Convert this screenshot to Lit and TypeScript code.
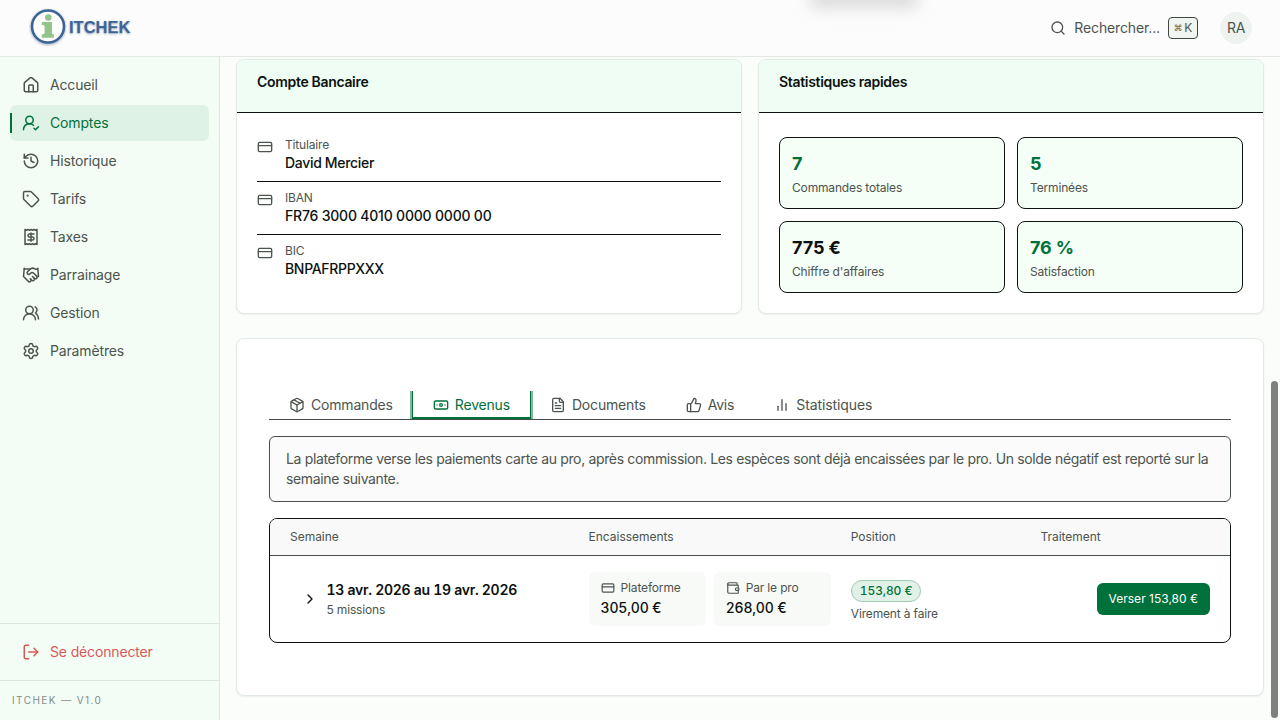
import { LitElement, html, css, svg } from "lit";
import { customElement } from "lit/decorators.js";
import { classMap } from "lit/directives/class-map.js";

const ICONS: Record<string, unknown> = {
  house: svg`<path d="M15 21v-8a1 1 0 0 0-1-1h-4a1 1 0 0 0-1 1v8"/><path d="M3 10a2 2 0 0 1 .709-1.528l7-5.999a2 2 0 0 1 2.582 0l7 5.999A2 2 0 0 1 21 10v9a2 2 0 0 1-2 2H5a2 2 0 0 1-2-2z"/>`,
  userCheck: svg`<path d="M2 21a8 8 0 0 1 13.292-6"/><circle cx="10" cy="8" r="5"/><path d="m16 19 2 2 4-4"/>`,
  history: svg`<path d="M3 12a9 9 0 1 0 9-9 9.75 9.75 0 0 0-6.74 2.74L3 8"/><path d="M3 3v5h5"/><path d="M12 7v5l4 2"/>`,
  tag: svg`<path d="M12.586 2.586A2 2 0 0 0 11.172 2H4a2 2 0 0 0-2 2v7.172a2 2 0 0 0 .586 1.414l8.704 8.704a2.426 2.426 0 0 0 3.42 0l6.58-6.58a2.426 2.426 0 0 0 0-3.42z"/><circle cx="7.5" cy="7.5" r=".5" fill="currentColor"/>`,
  receipt: svg`<path d="M4 2v20l2-1 2 1 2-1 2 1 2-1 2 1 2-1 2 1V2l-2 1-2-1-2 1-2-1-2 1-2-1-2 1Z"/><path d="M16 8h-6a2 2 0 1 0 0 4h4a2 2 0 1 1 0 4H8"/><path d="M12 17.5v-11"/>`,
  handshake: svg`<path d="m11 17 2 2a1 1 0 1 0 3-3"/><path d="m14 14 2.5 2.5a1 1 0 1 0 3-3l-3.88-3.88a3 3 0 0 0-4.24 0l-.88.88a1 1 0 1 1-3-3l2.81-2.81a5.79 5.79 0 0 1 7.06-.87l.47.28a2 2 0 0 0 1.42.25L21 4"/><path d="m21 3 1 11h-2"/><path d="M3 3 2 14l6.5 6.5a1 1 0 1 0 3-3"/><path d="M3 4h8"/>`,
  users: svg`<path d="M18 21a8 8 0 0 0-16 0"/><circle cx="10" cy="8" r="5"/><path d="M22 20c0-3.37-2-6.5-4-8a5 5 0 0 0-.45-8.3"/>`,
  settings: svg`<path d="M9.671 4.136a2.34 2.34 0 0 1 4.659 0 2.34 2.34 0 0 0 3.319 1.915 2.34 2.34 0 0 1 2.33 4.033 2.34 2.34 0 0 0 0 3.831 2.34 2.34 0 0 1-2.33 4.033 2.34 2.34 0 0 0-3.319 1.915 2.34 2.34 0 0 1-4.659 0 2.34 2.34 0 0 0-3.32-1.915 2.34 2.34 0 0 1-2.33-4.033 2.34 2.34 0 0 0 0-3.831A2.34 2.34 0 0 1 6.35 6.051a2.34 2.34 0 0 0 3.319-1.915"/><circle cx="12" cy="12" r="3"/>`,
  logout: svg`<path d="m16 17 5-5-5-5"/><path d="M21 12H9"/><path d="M9 21H5a2 2 0 0 1-2-2V5a2 2 0 0 1 2-2h4"/>`,
  card: svg`<rect width="20" height="14" x="2" y="5" rx="2"/><path d="M2 10h20"/>`,
  pack: svg`<path d="M11 21.73a2 2 0 0 0 2 0l7-4A2 2 0 0 0 21 16V8a2 2 0 0 0-1-1.73l-7-4a2 2 0 0 0-2 0l-7 4A2 2 0 0 0 3 8v8a2 2 0 0 0 1 1.73z"/><path d="M12 22V12"/><path d="M3.29 7 12 12l8.71-5"/><path d="m7.5 4.27 9 5.15"/>`,
  banknote: svg`<rect width="20" height="12" x="2" y="6" rx="2"/><circle cx="12" cy="12" r="2"/><path d="M6 12h.01M18 12h.01"/>`,
  file: svg`<path d="M15 2H6a2 2 0 0 0-2 2v16a2 2 0 0 0 2 2h12a2 2 0 0 0 2-2V7Z"/><path d="M14 2v4a2 2 0 0 0 2 2h4"/><path d="M10 9H8"/><path d="M16 13H8"/><path d="M16 17H8"/>`,
  thumb: svg`<path d="M7 10v12"/><path d="M15 5.88 14 10h5.83a2 2 0 0 1 1.92 2.56l-2.33 8A2 2 0 0 1 17.5 22H4a2 2 0 0 1-2-2v-8a2 2 0 0 1 2-2h2.76a2 2 0 0 0 1.79-1.11L12 2a3.13 3.13 0 0 1 3 3.88Z"/>`,
  chart: svg`<path d="M18 20V10"/><path d="M12 20V4"/><path d="M6 20v-6"/>`,
  wallet: svg`<path d="M19 7V4a1 1 0 0 0-1-1H5a2 2 0 0 0 0 4h15a1 1 0 0 1 1 1v4h-3a2 2 0 0 0 0 4h3a1 1 0 0 0 1-1v-2a1 1 0 0 0-1-1"/><path d="M3 5v14a2 2 0 0 0 2 2h15a1 1 0 0 0 1-1v-4"/>`,
  search: svg`<path d="m21 21-4.34-4.34"/><circle cx="11" cy="11" r="8"/>`,
  chevron: svg`<path d="m9 18 6-6-6-6"/>`,
};

const icon = (name: string, size: number, stroke = 2) => html`<svg
  class="icon" width=${size} height=${size} viewBox="0 0 24 24" fill="none"
  stroke="currentColor" stroke-width=${stroke} stroke-linecap="round" stroke-linejoin="round"
>${ICONS[name]}</svg>`;

const NAV = [
  ["house", "Accueil"],
  ["userCheck", "Comptes"],
  ["history", "Historique"],
  ["tag", "Tarifs"],
  ["receipt", "Taxes"],
  ["handshake", "Parrainage"],
  ["users", "Gestion"],
  ["settings", "Paramètres"],
];

const BANK = [
  ["Titulaire", "David Mercier"],
  ["IBAN", "FR76 3000 4010 0000 0000 00"],
  ["BIC", "BNPAFRPPXXX"],
];

const STATS = [
  { value: "7", label: "Commandes totales", green: true },
  { value: "5", label: "Terminées", green: true },
  { value: "775 €", label: "Chiffre d'affaires", green: false },
  { value: "76 %", label: "Satisfaction", green: true },
];

const TABS = [
  ["pack", "Commandes"],
  ["banknote", "Revenus"],
  ["file", "Documents"],
  ["thumb", "Avis"],
  ["chart", "Statistiques"],
];

@customElement("app-root")
export class AppRoot extends LitElement {
  static styles = css`
    :host {
      display: grid;
      grid-template-rows: 57px 1fr;
      position: relative;
      width: 1280px;
      height: 720px;
      overflow: hidden;
      background: #fbfdfa;
      color: #0c120e;
      font: 400 14px/20px Inter, sans-serif;
    }
    * { box-sizing: border-box; }
    .icon { display: block; flex: none; }

    .topbar {
      display: flex;
      align-items: center;
      position: relative;
      overflow: hidden;
      padding: 0 28px 0 29px;
      background: #fcfcfc;
      border-bottom: 1px solid #e3e8e4;
    }
    .haze {
      position: absolute;
      left: 811px;
      top: -12px;
      width: 106px;
      height: 20px;
      background: #dadada;
      filter: blur(8px);
    }
    .brand { display: flex; align-items: center; gap: 2px; margin-right: auto; }
    .brand-mark { display: block; filter: drop-shadow(0 1px 1.5px rgba(40, 70, 110, .45)); }
    .brand-name {
      padding-bottom: 3px;
      font: 700 16.5px/20px "Liberation Sans", sans-serif;
      color: #3d6496;
      text-shadow: 0 1px 2px rgba(40, 70, 110, .5);
    }
    .search { display: flex; align-items: center; color: #4c544e; }
    .search-label { margin: 0 8px; letter-spacing: -.13px; }
    .kbd {
      display: flex;
      align-items: center;
      justify-content: center;
      gap: 2px;
      width: 30px;
      height: 22px;
      border: 1px solid #3f4641;
      border-radius: 4px;
      background: #f1f5f1;
      font-size: 12px;
      line-height: 16px;
    }
    .cmd { font: 8.5px/12px "DejaVu Sans", sans-serif; }
    .avatar {
      display: grid;
      place-items: center;
      width: 32px;
      height: 32px;
      margin-left: 22px;
      border-radius: 50%;
      background: #eff3f0;
      color: #4c544e;
      letter-spacing: -.4px;
    }

    .body { display: grid; grid-template-columns: 220px 1fr; min-height: 0; }
    .sidebar {
      display: flex;
      flex-direction: column;
      background: #f4fdf5;
      border-right: 1px solid #e0e6e1;
    }
    .nav { display: flex; flex-direction: column; gap: 2px; flex: 1; padding: 10px; }
    .nav-item {
      display: flex;
      align-items: center;
      gap: 10px;
      height: 36px;
      padding: 0 12px;
      border-radius: 6px;
      color: #4c544e;
      letter-spacing: -.15px;
    }
    .nav-item.active { position: relative; background: #dff2e6; color: #00713a; }
    .nav-item.active::before {
      content: "";
      position: absolute;
      left: 0;
      top: 8px;
      width: 2px;
      height: 20px;
      background: #00713a;
    }
    .logout { padding: 10px; border-top: 1px solid #dde4de; }
    .logout .nav-item { color: #d75a5a; }
    .version {
      height: 40px;
      padding: 11px 12px;
      border-top: 1px solid #dde4de;
      color: #828d85;
      font-size: 10px;
      line-height: 16px;
      letter-spacing: 1.42px;
    }

    .main { padding: 2px 16px 0; min-width: 0; }
    .row { display: grid; grid-template-columns: 1fr 1fr; gap: 16px; }
    .panel {
      border: 1px solid #e3e9e4;
      border-radius: 8px;
      background: #fff;
      box-shadow: 0 1px 2px rgba(0, 0, 0, .06);
      overflow: hidden;
    }
    .row .panel { height: 255px; }
    .panel-head {
      height: 53px;
      padding: 12px 20px;
      background: #f0fdf4;
      border-bottom: 1px solid #0c120e;
      font-weight: 600;
      letter-spacing: -.32px;
    }
    .bank { padding: 16px 20px; }
    .bank-row { display: flex; gap: 12px; height: 53px; padding-top: 8px; border-bottom: 1px solid #0c120e; }
    .bank-row:last-child { border-bottom: 0; }
    .bank-row .icon { margin-top: 2px; color: #4c544e; }
    .small { font-size: 12px; line-height: 16px; color: #4c544e; letter-spacing: -.16px; }
    .bank-value { font-weight: 500; letter-spacing: -.32px; }
    .bank-value.digits { letter-spacing: -.2px; }
    .stats { display: grid; grid-template-columns: 1fr 1fr; gap: 12px; padding: 24px 20px; }
    .stat {
      height: 72px;
      padding: 12px;
      border: 1px solid #0c120e;
      border-radius: 8px;
      background: #f5fef7;
    }
    .stat-value { margin-bottom: 2px; font-size: 18px; line-height: 28px; font-weight: 700; letter-spacing: -.1px; }
    .stat-value.green { color: #00713a; }

    .details { height: 358px; margin-top: 24px; padding: 52px 32px 0; }
    .tabs { display: flex; height: 29px; overflow: hidden; border-bottom: 1px solid #474d49; }
    .tab {
      display: flex;
      align-items: center;
      gap: 6px;
      height: 28px;
      padding: 0 20px;
      color: #4c544e;
      letter-spacing: -.18px;
    }
    .tab:last-child { letter-spacing: -.1px; }
    .tab.active {
      color: #00713a;
      outline: 1px solid #00713a;
      box-shadow: 0 0 0 3px rgba(0, 113, 58, .5), inset 0 -2px 0 #00713a;
    }
    .notice {
      margin-top: 16px;
      height: 66px;
      padding: 12px 16px;
      border: 1px solid #474d49;
      border-radius: 6px;
      background: #fbfbfb;
      color: #4c544e;
      letter-spacing: -.35px;
    }
    .table { margin-top: 16px; height: 125px; border: 1px solid #0c120e; border-radius: 8px; overflow: hidden; }
    .grid {
      display: grid;
      grid-template-columns: 278.6px 242.2px 169.6px 1fr;
      column-gap: 20px;
      align-items: center;
      padding: 0 20px;
    }
    .thead {
      height: 37px;
      background: #f8f9f8;
      border-bottom: 1px solid #474d49;
      font-size: 12px;
      color: #4c544e;
      letter-spacing: -.02px;
    }
    .trow { height: 86px; }
    .week { display: flex; align-items: center; gap: 8.5px; padding-left: 12px; }
    .week-title { margin-bottom: 2px; font-weight: 600; font-variant-numeric: tabular-nums; letter-spacing: -.29px; }
    .amounts { display: grid; grid-template-columns: 1fr 1fr; gap: 8px; }
    .amount { height: 54px; padding: 8px 12px; border-radius: 6px; background: #f8faf8; }
    .amount-label { display: flex; align-items: center; gap: 6px; }
    .amount-value { margin-top: 2px; font-weight: 500; font-variant-numeric: tabular-nums; letter-spacing: -.2px; }
    .position { display: flex; flex-direction: column; align-items: flex-start; gap: 4px; padding-top: 4px; }
    .pill {
      height: 22px;
      padding: 2px 8px;
      border: 1px solid #9fcbb1;
      border-radius: 11px;
      background: #e2f1e8;
      color: #00713a;
      font-size: 12px;
      line-height: 16px;
      font-weight: 500;
      font-variant-numeric: tabular-nums;
      letter-spacing: -.1px;
    }
    .pay {
      justify-self: end;
      height: 32px;
      padding: 0 12px;
      border: 0;
      border-radius: 6px;
      background: #00713a;
      color: #fff;
      font: 400 12px/16px Inter, sans-serif;
      letter-spacing: .01px;
    }
    .scrollbar {
      position: absolute;
      left: 1271px;
      top: 381px;
      width: 7px;
      height: 337px;
      border-radius: 4px;
      background: #7e807e;
    }
  `;

  private renderTopbar() {
    return html`<header class="topbar">
      <div class="haze"></div>
      <div class="brand">
        <svg class="brand-mark" width="38" height="40" viewBox="0 0 38 40">
          <circle cx="19" cy="18.5" r="16" fill="#fdfefd" stroke="#3d6496" stroke-width="2.6"/>
          <g fill="#93c58b">
            <circle cx="19.3" cy="9.5" r="3.3"/>
            <path d="M12.800 14H23v11c0 .9.500 1.300 1.900 1.400v3.400H12.800v-3.400c1.900-.1 2.800-.5 2.800-1.400v-6.800c0-.7-.8-1-2.800-1.100z"/>
          </g>
        </svg>
        <span class="brand-name">ITCHEK</span>
      </div>
      <div class="search">
        ${icon("search", 16)}
        <span class="search-label">Rechercher...</span>
        <span class="kbd"><span class="cmd">⌘</span><span>K</span></span>
      </div>
      <div class="avatar">RA</div>
    </header>`;
  }

  private renderSidebar() {
    return html`<aside class="sidebar">
      <nav class="nav">
        ${NAV.map(
          ([ic, label]) => html`<a class=${classMap({ "nav-item": true, active: label === "Comptes" })}>${icon(ic, 18)}<span>${label}</span></a>`,
        )}
      </nav>
      <div class="logout"><a class="nav-item">${icon("logout", 18)}<span>Se déconnecter</span></a></div>
      <div class="version">ITCHEK — V1.0</div>
    </aside>`;
  }

  render() {
    return html`
      ${this.renderTopbar()}
      <div class="body">
        ${this.renderSidebar()}
        <main class="main">
          <div class="row">
            <section class="panel">
              <div class="panel-head">Compte Bancaire</div>
              <div class="bank">
                ${BANK.map(
                  ([label, value]) => html`<div class="bank-row">
                    ${icon("card", 16)}
                    <div>
                      <div class="small">${label}</div>
                      <div class=${classMap({ "bank-value": true, digits: label === "IBAN" })}>${value}</div>
                    </div>
                  </div>`,
                )}
              </div>
            </section>
            <section class="panel">
              <div class="panel-head">Statistiques rapides</div>
              <div class="stats">
                ${STATS.map(
                  (s) => html`<div class="stat">
                    <div class=${classMap({ "stat-value": true, green: s.green })}>${s.value}</div>
                    <div class="small">${s.label}</div>
                  </div>`,
                )}
              </div>
            </section>
          </div>
          <section class="panel details">
            <div class="tabs">
              ${TABS.map(
                ([ic, label]) => html`<div class=${classMap({ tab: true, active: label === "Revenus" })}>${icon(ic, 16)}<span>${label}</span></div>`,
              )}
            </div>
            <div class="notice">La plateforme verse les paiements carte au pro, après commission. Les espèces sont déjà encaissées par le pro. Un solde négatif est reporté sur la semaine suivante.</div>
            <div class="table">
              <div class="grid thead"><span>Semaine</span><span>Encaissements</span><span>Position</span><span>Traitement</span></div>
              <div class="grid trow">
                <div class="week">
                  ${icon("chevron", 16)}
                  <div><div class="week-title">13 avr. 2026 au 19 avr. 2026</div><div class="small">5 missions</div></div>
                </div>
                <div class="amounts">
                  <div class="amount">
                    <div class="amount-label small">${icon("card", 14)}<span>Plateforme</span></div>
                    <div class="amount-value">305,00 €</div>
                  </div>
                  <div class="amount">
                    <div class="amount-label small">${icon("wallet", 14)}<span>Par le pro</span></div>
                    <div class="amount-value">268,00 €</div>
                  </div>
                </div>
                <div class="position"><span class="pill">153,80 €</span><span class="small">Virement à faire</span></div>
                <button class="pay">Verser 153,80 €</button>
              </div>
            </div>
          </section>
        </main>
      </div>
      <div class="scrollbar"></div>
    `;
  }
}
